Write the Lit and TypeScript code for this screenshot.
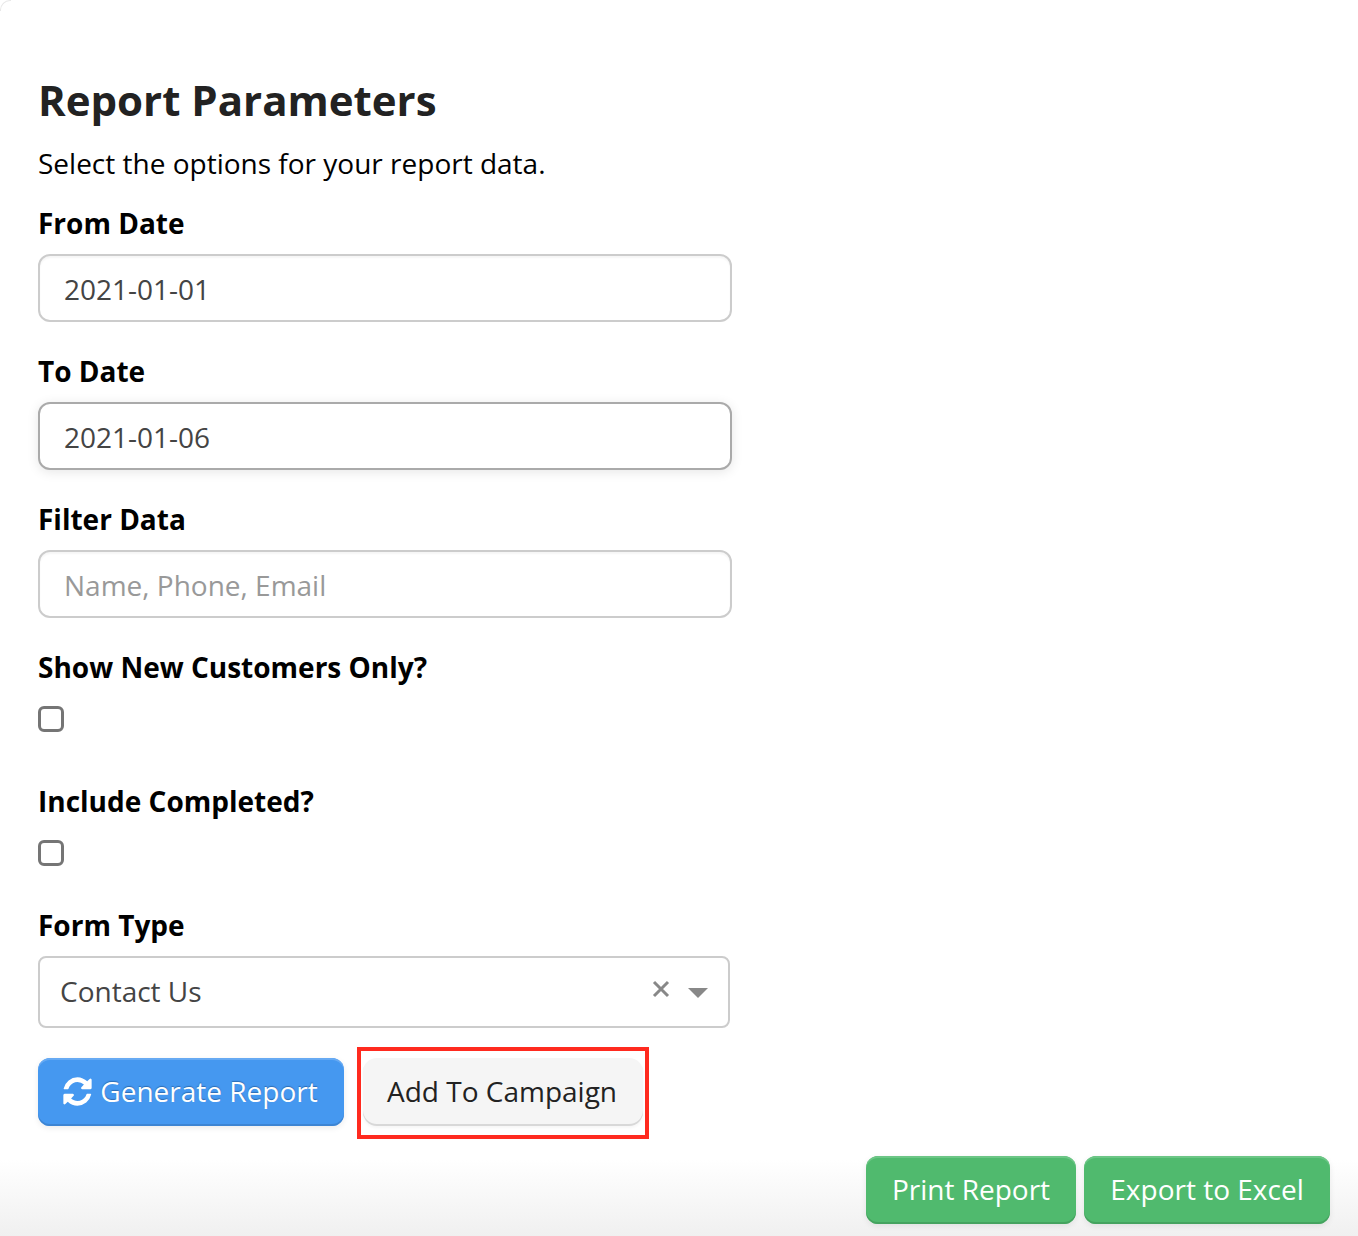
import { LitElement, html, css } from "lit";
import { customElement } from "lit/decorators.js";

@customElement("app-root")
export class AppRoot extends LitElement {
  static styles = css`
    :host {
      display: block;
      position: relative;
      box-sizing: border-box;
      height: 1236px;
      overflow: hidden;
      padding: 73px 28px 0 38px;
      background: linear-gradient(to bottom, #fff 0, #fff 1160px, #f0f0f0 1236px);
      font-family: "Open Sans", sans-serif;
      font-size: 28px;
      color: #000;
    }
    :host::before {
      content: "";
      position: absolute;
      top: 0;
      left: 0;
      width: 10px;
      height: 10px;
      border-top: 1px solid #e8e8e8;
      border-left: 1px solid #e8e8e8;
      border-top-left-radius: 10px;
    }
    * { box-sizing: border-box; }
    h2 {
      margin: 0;
      font-size: 42px;
      line-height: 54px;
      font-weight: 700;
      color: #222;
    }
    p {
      margin: 16px 0 0;
      line-height: 40px;
    }
    .form { width: 694px; }
    .group { margin-top: 29px; }
    .group.lead { margin-top: 20px; }
    label {
      display: block;
      font-weight: 700;
      line-height: 40px;
      margin-bottom: 11px;
    }
    input.text {
      display: block;
      width: 100%;
      height: 68px;
      padding: 2px 24px 0;
      border: 2px solid #ccc;
      border-radius: 12px;
      background: #fff;
      font: inherit;
      color: #444;
      outline: none;
      box-shadow: inset 0 2px 2px rgba(0, 0, 0, 0.04);
    }
    input.text::placeholder { color: #999; opacity: 1; }
    input.focus {
      border-color: #aaa;
      box-shadow: 0 2px 12px rgba(0, 0, 0, 0.1);
    }
    .check-group { margin-top: 29px; height: 105px; }
    .check-group.b { height: 95px; }
    .check-group label { margin-bottom: 19px; }
    .check {
      display: block;
      width: 26px;
      height: 26px;
      border: 3px solid #757575;
      border-radius: 6px;
      background: #fff;
    }
    .select {
      display: flex;
      align-items: center;
      width: 692px;
      height: 72px;
      padding: 0 22px 2px 20px;
      border: 2px solid #ccc;
      border-radius: 8px;
      color: #444;
      background: #fff;
    }
    .select .value { flex: 1; }
    .clear { width: 18px; height: 18px; margin-right: 18px; margin-top: -4px; }
    .arrow {
      width: 0;
      height: 0;
      margin-right: -2px;
      margin-top: 3px;
      border-left: 10px solid transparent;
      border-right: 10px solid transparent;
      border-top: 10px solid #888;
    }
    .actions { display: flex; gap: 19px; margin-top: 30px; }
    .btn {
      position: relative;
      display: inline-flex;
      align-items: center;
      justify-content: center;
      height: 68px;
      padding: 0 0 2px;
      border: 0;
      border-radius: 12px;
      font: inherit;
      white-space: nowrap;
    }
    .blue {
      width: 306px;
      gap: 6px;
      padding-right: 3px;
      color: #fff;
      background: #4598f0;
      text-shadow: 0 -1px 1px rgba(30, 80, 140, 0.6);
      box-shadow: inset 0 2px 0 #67aaf3, inset 0 -2px 0 #3d85d3, 0 2px 6px rgba(0, 0, 0, 0.08);
    }
    .blue svg { width: 33px; height: 33px; flex: none; fill: #fff; }
    .grey {
      width: 280px;
      padding-right: 2px;
      color: #222;
      background: #f5f5f5;
      border-radius: 14px;
      box-shadow: inset 0 -2px 0 #d8d8d8, 0 2px 3px rgba(0, 0, 0, 0.04);
    }
    .mark {
      position: absolute;
      inset: -11px -6px -13px -6px;
      border: 4px solid #ff2a1f;
      pointer-events: none;
    }
    .footer { display: flex; justify-content: flex-end; gap: 8px; margin-top: 30px; }
    .green {
      color: #fff;
      background: #50ba6e;
      box-shadow: inset 0 2px 0 #6cc686, inset 0 -2px 0 #45a35f, 0 2px 6px rgba(0, 0, 0, 0.08);
    }
    .print { width: 210px; }
    .excel { width: 246px; }
  `;

  render() {
    return html`
      <h2>Report Parameters</h2>
      <p>Select the options for your report data.</p>
      <div class="form">
        <div class="group lead">
          <label>From Date</label>
          <input class="text" .value=${"2021-01-01"} />
        </div>
        <div class="group">
          <label>To Date</label>
          <input class="text focus" .value=${"2021-01-06"} />
        </div>
        <div class="group">
          <label>Filter Data</label>
          <input class="text" placeholder="Name, Phone, Email" />
        </div>
        <div class="check-group">
          <label>Show New Customers Only?</label>
          <span class="check"></span>
        </div>
        <div class="check-group b">
          <label>Include Completed?</label>
          <span class="check"></span>
        </div>
        <div class="group">
          <label>Form Type</label>
          <div class="select">
            <span class="value">Contact Us</span>
            <svg class="clear" viewBox="0 0 18 18">
              <path d="M2 2L16 16M16 2L2 16" stroke="#888" stroke-width="3" fill="none" />
            </svg>
            <span class="arrow"></span>
          </div>
        </div>
      </div>
      <div class="actions">
        <button class="btn blue">
          <svg viewBox="0 0 1792 1792">
            <path d="M1639 1056q0 5-1 7-64 268-268 434.5t-478 166.5q-146 0-282.5-55t-243.5-157l-129 129q-19 19-45 19t-45-19-19-45v-448q0-26 19-45t45-19h448q26 0 45 19t19 45-19 45l-137 137q71 66 161 102t187 36q134 0 250-65t186-179q11-17 53-117 8-23 30-23h192q13 0 22.5 9.5t9.5 22.5zm25-800v448q0 26-19 45t-45 19h-448q-26 0-45-19t-19-45 19-45l138-138q-148-137-349-137-134 0-250 65t-186 179q-11 17-53 117-8 23-30 23h-199q-13 0-22.5-9.5t-9.5-22.5v-7q65-268 270-434.5t480-166.5q146 0 284 55.5t245 156.5l130-129q19-19 45-19t45 19 19 45z" />
          </svg>
          Generate Report
        </button>
        <button class="btn grey">Add To Campaign<span class="mark"></span></button>
      </div>
      <div class="footer">
        <button class="btn green print">Print Report</button>
        <button class="btn green excel">Export to Excel</button>
      </div>
    `;
  }
}
